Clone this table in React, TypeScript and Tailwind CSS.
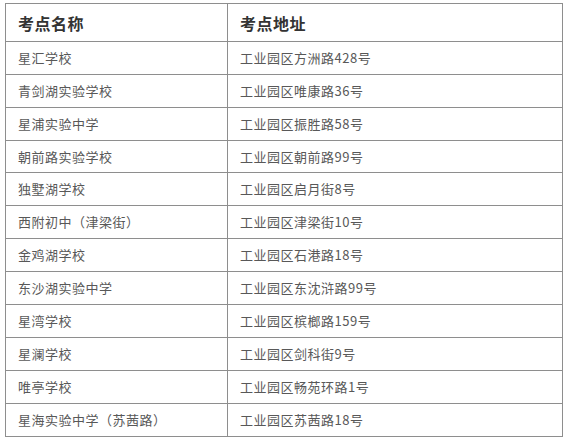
const rows: [string, string, number][] = [
  ["星汇学校", "工业园区方洲路428号", 33],
  ["青剑湖实验学校", "工业园区唯康路36号", 33],
  ["星浦实验中学", "工业园区振胜路58号", 33],
  ["朝前路实验学校", "工业园区朝前路99号", 32],
  ["独墅湖学校", "工业园区启月街8号", 33],
  ["西附初中（津梁街）", "工业园区津梁街10号", 33],
  ["金鸡湖学校", "工业园区石港路18号", 33],
  ["东沙湖实验中学", "工业园区东沈浒路99号", 33],
  ["星湾学校", "工业园区槟榔路159号", 33],
  ["星澜学校", "工业园区剑科街9号", 33],
  ["唯亭学校", "工业园区畅苑环路1号", 33],
  ["星海实验中学（苏茜路）", "工业园区苏茜路18号", 32],
];

export default function App() {
  return (
    <div className="w-[568px] h-[438px] bg-white pt-[3px] pl-[5px] font-['Noto_Sans_CJK_SC',sans-serif]">
      <div className="w-[558px] border border-[#8e8e8e]">
        <div className="flex h-[38px] border-b border-[#8e8e8e] text-[16px] font-bold text-[#333]">
          <div className="w-[222px] border-r border-[#8e8e8e] flex items-center px-3 tracking-[0.5px]">考点名称</div>
          <div className="flex-1 flex items-center px-3 tracking-[0.5px]">考点地址</div>
        </div>
        {rows.map(([name, addr, h], i) => (
          <div
            key={name}
            className={`flex text-[13px] text-[#585858] tracking-[0.5px] ${i < rows.length - 1 ? "border-b border-[#8e8e8e]" : ""}`}
            style={{ height: h }}
          >
            <div className="w-[222px] border-r border-[#8e8e8e] flex items-center px-3">{name}</div>
            <div className="flex-1 flex items-center px-3">{addr}</div>
          </div>
        ))}
      </div>
    </div>
  );
}
